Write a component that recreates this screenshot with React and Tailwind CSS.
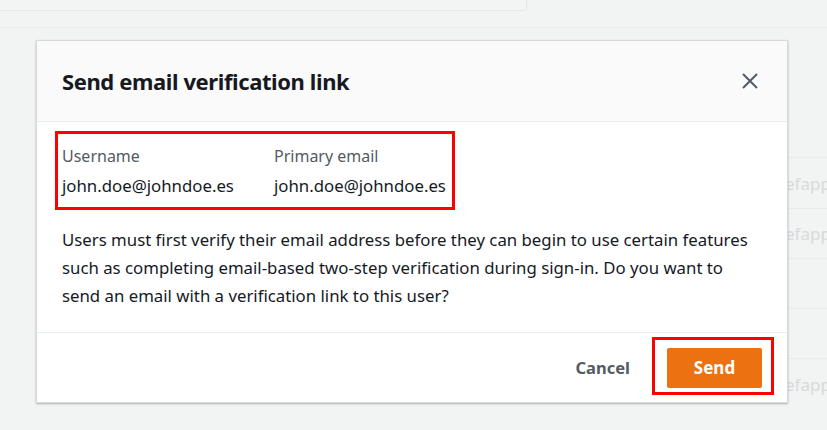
import React from 'react';

const rows = [157, 208, 258, 308, 358];

const App = () => {
  return (
    <div className="relative w-[827px] h-[430px] overflow-hidden bg-[#f2f3f3] font-['Noto_Sans',sans-serif]">
      {/* background page behind the modal */}
      <div className="absolute left-0 top-0 w-[527px] h-[11px] bg-[#f3f4f4] border-b border-r border-[#e7e9e9] rounded-br-[3px]" />
      <div className="absolute left-0 top-[27px] w-full border-t border-[#eaeded]" />
      {rows.map((y) => (
        <div key={y} className="absolute left-[788px] w-[40px] border-t border-[#e9ebeb]" style={{ top: y }} />
      ))}
      {[172, 222, 373].map((y) => (
        <div key={y} className="absolute left-[785px] w-[42px] overflow-hidden whitespace-nowrap text-[17px] text-[#d5dbdb] leading-[24px]" style={{ top: y }}>
          efapp
        </div>
      ))}

      {/* modal */}
      <div className="absolute left-[36px] top-[40px] w-[752px] bg-white border border-[#d5dbdb] shadow-[0_1px_2px_rgba(0,28,36,0.3)]">
        <div className="flex items-center justify-between h-[81px] px-[25px] bg-[#fafafa] border-b border-[#eaeded]">
          <h2 className="text-[22px] font-bold text-[#16191f] tracking-[-0.4px]">Send email verification link</h2>
          <button className="w-[24px] h-[24px] flex items-center justify-center text-[#545b64]">
            <svg width="16" height="16" viewBox="0 0 16 16" fill="none" stroke="currentColor" strokeWidth="2">
              <path d="M1 1l14 14M15 1L1 15" />
            </svg>
          </button>
        </div>

        <div className="px-[25px] pt-[9px] pb-[22px]">
          <div className="flex gap-[25px] w-[400px] -ml-[7px] pl-[4px] pt-[11px] pb-[9px] border-[3px] border-[#ff0000]">
            <div className="w-[187px]">
              <div className="text-[16px] leading-[22px] text-[#545b64]">Username</div>
              <div className="mt-[7px] text-[16.8px] leading-[24px] text-[#16191f]">john.doe@johndoe.es</div>
            </div>
            <div>
              <div className="text-[16px] leading-[22px] text-[#545b64]">Primary email</div>
              <div className="mt-[7px] text-[16.8px] leading-[24px] text-[#16191f]">john.doe@johndoe.es</div>
            </div>
          </div>
          <p className="mt-[16px] text-[16.8px] leading-[28px] text-[#16191f]">
            Users must first verify their email address before they can begin to use certain features such as
            completing email-based two-step verification during sign-in. Do you want to send an email with a
            verification link to this user?
          </p>
        </div>

        <div className="flex items-start justify-end gap-[22px] h-[70px] pt-[4px] pr-[13px] border-t border-[#eaeded]">
          <button className="mt-[19px] leading-[24px] text-[16.5px] font-bold text-[#545b64]">Cancel</button>
          <div className="border-[3px] border-[#ff0000] pl-[12px] pr-[9px] pt-[8px] pb-[4px]">
            <button className="w-[95px] h-[40px] rounded-[2px] bg-[#ec7211] text-white text-[17px] font-bold">
              Send
            </button>
          </div>
        </div>
      </div>
    </div>
  );
};

export default App;
